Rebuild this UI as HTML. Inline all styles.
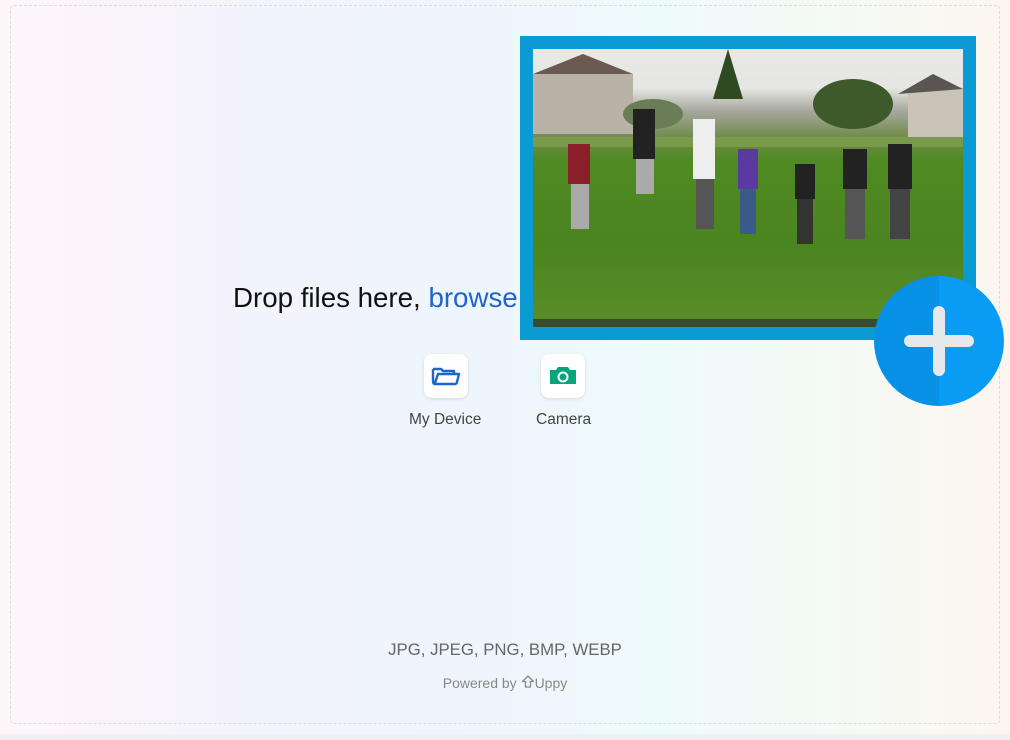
<!DOCTYPE html>
<html><head><meta charset="utf-8"><style>
*{margin:0;padding:0;box-sizing:border-box}
body{width:1010px;height:740px;overflow:hidden;font-family:"Liberation Sans",sans-serif;background:linear-gradient(90deg,#fdf7fa 0%,#fbf4fa 8%,#f3f3fc 25%,#eef5fd 45%,#eefbfb 65%,#f3faf6 80%,#fdf6ef 100%);position:relative}
.border{position:absolute;left:10px;top:5px;width:990px;height:719px;border:1px dashed #dcdcdc;border-radius:4px}
.bottom{position:absolute;left:0;top:734px;width:1010px;height:6px;background:#eef0f2}
.drop{position:absolute;left:233px;top:282px;font-size:27.7px;color:#111;white-space:nowrap}
.drop span{color:#1f64c8}
.btn{position:absolute;width:44px;height:44px;background:#fff;border-radius:8px;box-shadow:0 1px 3px rgba(0,0,0,.12)}
.lbl{position:absolute;font-size:15.5px;color:#444}
.frame{position:absolute;left:520px;top:36px;width:456px;height:304px;background:#0a9bd4}
.photo{position:absolute;left:13px;top:13px;width:430px;height:278px;overflow:hidden;background:linear-gradient(180deg,#e8e8e6 0%,#e6e6e4 14%,#a9a9a0 22%,#6f8a48 32%,#4f8a22 40%,#4a8520 70%,#5a8d28 100%)}
.fab{position:absolute;left:874px;top:276px;width:130px;height:130px;border-radius:50%;background:linear-gradient(90deg,#0690e6 50%,#0a9cf5 50%)}
</style></head><body>
<div class="border"></div>
<div class="bottom"></div>
<div class="drop">Drop files here, <span>browse</span></div>
<div class="frame"><div class="photo">
<svg width="430" height="278">
<rect x="0" y="25" width="100" height="60" fill="#b9b2a6"/>
<polygon points="0,25 50,5 100,25" fill="#6a5a52"/>
<rect x="375" y="40" width="55" height="50" fill="#c9c3b8"/>
<polygon points="365,45 400,25 430,40" fill="#5b5552"/>
<polygon points="180,50 195,0 210,50" fill="#2f4a23"/>
<ellipse cx="320" cy="55" rx="40" ry="25" fill="#3f5a2a"/>
<ellipse cx="120" cy="65" rx="30" ry="15" fill="#6b7d55"/>
<rect x="0" y="88" width="430" height="10" fill="#789a4a"/>
<g fill="#222">
<rect x="35" y="95" width="22" height="40" fill="#8a1f2a"/><rect x="100" y="60" width="22" height="50"/><rect x="160" y="70" width="22" height="60" fill="#eee"/>
<rect x="205" y="100" width="20" height="40" fill="#5a3aa0"/><rect x="262" y="115" width="20" height="35"/><rect x="310" y="100" width="24" height="40"/><rect x="355" y="95" width="24" height="45"/>
</g>
<g fill="#aaa"><rect x="38" y="135" width="18" height="45"/><rect x="103" y="110" width="18" height="35"/><rect x="163" y="130" width="18" height="50" fill="#555"/><rect x="207" y="140" width="16" height="45" fill="#3a5a8a"/><rect x="264" y="150" width="16" height="45" fill="#333"/><rect x="312" y="140" width="20" height="50" fill="#555"/><rect x="357" y="140" width="20" height="50" fill="#444"/></g>
<rect x="0" y="270" width="430" height="8" fill="#3a4a2a"/>
</svg></div></div>
<div class="fab"><svg width="130" height="130"><rect x="59" y="30" width="12" height="70" rx="6" fill="#e6e8ec"/><rect x="30" y="59" width="70" height="12" rx="6" fill="#e6e8ec"/></svg></div>
<div class="btn" style="left:424px;top:354px"><svg width="44" height="44" viewBox="0 0 44 44"><path d="M9 15v13a2 2 0 0 0 2 2h20a2 2 0 0 0 2-2l2-8H14l-3 9M9 15h8l2 2h11v3" fill="none" stroke="#1f64c8" stroke-width="2.4" stroke-linejoin="round"/></svg></div>
<div class="btn" style="left:541px;top:354px"><svg width="44" height="44" viewBox="0 0 44 44"><path d="M9 16h6l2-3h10l2 3h6v14H9z" fill="#06a57e"/><circle cx="22" cy="23" r="4.5" fill="none" stroke="#fff" stroke-width="2"/></svg></div>
<div class="lbl" style="left:409px;top:411px">My Device</div>
<div class="lbl" style="left:536px;top:411px">Camera</div>
<div style="position:absolute;left:0;width:1010px;top:640px;text-align:center;font-size:16.8px;color:#666">JPG, JPEG, PNG, BMP, WEBP</div>
<div style="position:absolute;left:0;width:1010px;top:675px;text-align:center;font-size:14px;color:#888">Powered by <svg width="14" height="14" viewBox="0 0 14 14" style="vertical-align:-1px"><path d="M7 1L1.5 6.5H4.5V12h5V6.5h3z" fill="none" stroke="#888" stroke-width="1.3" stroke-linejoin="round"/></svg>Uppy</div>
</body></html>
